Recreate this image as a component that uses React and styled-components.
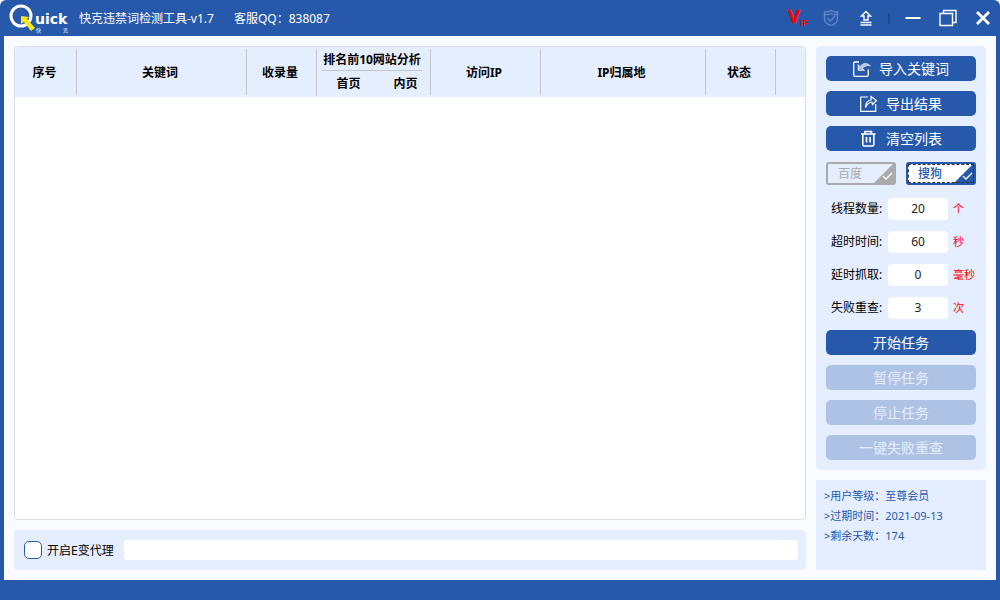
import React, { useState } from 'react';
import styled, { createGlobalStyle } from 'styled-components';

const blue = '#2759ab';
const pale = '#e5eeff';

const GlobalStyle = createGlobalStyle`
  * {
    box-sizing: border-box;
  }

  body {
    margin: 0;
    background: #fff;
  }

  body, button, input {
    font-family: "Noto Sans", "Noto Sans CJK SC", sans-serif;
    font-size: 12px;
    line-height: 16px;
  }
`;

const Window = styled.div`
  display: flex;
  flex-direction: column;
  min-height: 100vh;
  background: ${blue};
  border-radius: 6px 6px 0 0;
`;

const TitleBar = styled.header`
  display: flex;
  align-items: center;
  height: 36px;
  padding-left: 9px;
  color: #fff;
`;

const Title = styled.h1`
  margin: 0 20px 0 9px;
  padding-top: 2px;
  font-size: 12px;
  font-weight: 400;
`;

const Contact = styled.span`
  flex: 1;
  padding-top: 2px;
`;

const BarButton = styled.button`
  display: flex;
  align-items: center;
  justify-content: center;
  width: ${({ $wide }) => ($wide ? '35px' : '34px')};
  height: 36px;
  padding: 0;
  border: 0;
  background: none;
  color: #fff;
`;

const Divider = styled.span`
  width: 2px;
  height: 11px;
  margin: 0 5px;
  background: #1f4a93;
`;

const Body = styled.div`
  display: flex;
  flex: 1;
  gap: 10px;
  margin: 0 4px 20px;
  padding: 10px;
  background: #f9fbfe;
`;

const Main = styled.main`
  display: flex;
  flex: 1;
  flex-direction: column;
  gap: 10px;
  min-width: 0;
`;

const TableBox = styled.div`
  flex: 1;
  overflow: hidden;
  border: 1px solid #dedfe2;
  border-radius: 4px;
  background: #fff;
`;

const Table = styled.table`
  width: 100%;
  table-layout: fixed;
  border-collapse: collapse;
  background: ${pale};
`;

const Row = styled.tr`
  height: 25px;
`;

const Th = styled.th`
  padding: 2px 2px 0 0;
  font-weight: 700;
  color: #000;
  background: linear-gradient(#c4c6ca, #c4c6ca) no-repeat left center;
  background-size: ${({ $line }) => ($line ? '1px 46px' : '0 0')};
`;

const GroupTh = styled(Th)`
  padding: 0;
  background-position: left 2px;
`;

const SubTh = styled(Th)`
  padding: 0 0 1px 8px;
  background-position: left -22px;
`;

const GroupLabel = styled.span`
  display: block;
  margin: 0 8px 0 6px;
  height: 22px;
  line-height: 22px;
  white-space: nowrap;
  border-bottom: 1px solid #c4c6ca;
`;

const ProxyBar = styled.div`
  display: flex;
  align-items: center;
  height: 40px;
  padding: 0 8px 0 10px;
  border-radius: 4px;
  background: ${pale};
`;

const ProxyLabel = styled.label`
  display: flex;
  align-items: center;
  gap: 5px;
  margin-right: 10px;
  color: #000;
`;

const ProxyText = styled.span`
  padding-top: 2px;
`;

const CheckBox = styled.input`
  appearance: none;
  width: 18px;
  height: 18px;
  margin: 0;
  border: 1px solid ${blue};
  border-radius: 5px;
  background: #fff;

  &:checked {
    background: ${blue};
  }
`;

const ProxyInput = styled.input`
  flex: 1;
  min-width: 0;
  height: 20px;
  padding: 0 6px;
  border: 0;
  border-radius: 4px;
  background: #fff;
`;

const Side = styled.aside`
  display: flex;
  flex-direction: column;
  gap: 10px;
  width: 170px;
`;

const Panel = styled.section`
  display: flex;
  flex-direction: column;
  gap: 10px;
  padding: 10px;
  border-radius: 5px;
  background: ${pale};
`;

const Button = styled.button`
  display: flex;
  align-items: center;
  justify-content: center;
  gap: 8px;
  height: 25px;
  padding: 0;
  border: 0;
  border-radius: 5px;
  font-size: 14px;
  color: #fff;
  background: ${blue};

  &:disabled {
    color: ${pale};
    background: #aec2e5;
  }
`;

const Engines = styled.div`
  display: flex;
  gap: 10px;
  padding: 1px 0;
`;

const Engine = styled.button`
  position: relative;
  flex: 1;
  height: 23px;
  padding: 0 22px 0 0;
  border: 2px solid ${({ $on }) => ($on ? blue : '#aaa')};
  border-radius: 3px;
  font-weight: ${({ $on }) => ($on ? 500 : 400)};
  line-height: 18px;
  color: ${({ $on }) => ($on ? blue : '#aaa')};
  background: ${({ $on }) => ($on ? '#fff' : pale)};
  outline: none;

  svg {
    position: absolute;
    right: 0;
    bottom: 0;
  }

  &::after {
    content: '';
    position: absolute;
    inset: 0;
    border: ${({ $on }) => ($on ? '1px dashed #333' : '0')};
  }
`;

const Fields = styled.div`
  display: flex;
  flex-direction: column;
  gap: 11px;
  padding: 2px 0 1px 5px;
`;

const Field = styled.div`
  display: flex;
  align-items: center;
  height: 22px;
`;

const FieldLabel = styled.label`
  width: 57px;
  color: #000;
`;

const NumberInput = styled.input`
  width: 60px;
  height: 22px;
  padding: 0 0 2px;
  border: 0;
  border-radius: 4px;
  text-align: center;
  color: #222;
  background: #fff;
`;

const Unit = styled.span`
  margin-left: 5px;
  font-size: 11px;
  white-space: nowrap;
  color: #f00;
`;

const Info = styled.section`
  flex: 1;
  padding: 6px 8px;
  font-size: 11px;
  line-height: 20px;
  color: ${blue};
  background: ${pale};
`;

const InfoLine = styled.div`
  white-space: nowrap;
`;

const Logo = () => (
  <svg width="61" height="32" viewBox="9 2 61 32" fill="none" aria-label="Quick">
    <circle cx="21" cy="16" r="10" stroke="#fff" strokeWidth="3" />
    <path d="M21 16l8 1-2 2 8 9-4 3-7-9-3 2z" fill="#ffe81a" />
    <text x="35" y="24" fontSize="14" fontWeight="700" fontFamily="DejaVu Sans" fill="#fff">uick</text>
    <text x="36" y="32" fontSize="5" fontFamily="Noto Sans CJK SC" fill="#fff">快</text>
    <text x="63" y="32" fontSize="5" fontFamily="Noto Sans CJK SC" fill="#fff">克</text>
  </svg>
);

const VipIcon = () => (
  <svg width="20" height="20" viewBox="0 0 20 20" fill="#f00" stroke="#f00" fontFamily="Liberation Sans" fontWeight="700">
    <text x="0" y="15" fontSize="18" strokeWidth=".6">V</text>
    <text x="12" y="18" fontSize="9" strokeWidth="0">IP</text>
  </svg>
);

const ShieldIcon = () => (
  <svg width="18" height="18" viewBox="0 0 18 18" fill="none" stroke="#6387c4" strokeWidth="1.3">
    <path d="M8 1.500c2 1.200 4 1.500 6.500 1.500V10c0 3-3 5.500-6.500 6.500-3.500-1-6.500-3.500-6.500-6.500V3C4 3 6 2.700 8 1.500z" />
    <path d="M2 5.500h2.500C6 5.500 7 5 8 4.500c1 .5 2 1 3.500 1H14M4.500 9l3 3 4.500-5" />
  </svg>
);

const UploadIcon = () => (
  <svg width="12" height="16" viewBox="0 0 12 16" fill="none" stroke="#fff" strokeWidth="1.4">
    <path d="M6 1.500L1.500 6H4v4h4V6h2.500z" />
    <path d="M.5 12.500h11M.5 15h11" />
  </svg>
);

const MinimizeIcon = () => (
  <svg width="16" height="16" viewBox="0 0 16 16" stroke="#fff" strokeWidth="2">
    <path d="M.5 8h15" />
  </svg>
);

const RestoreIcon = () => (
  <svg width="18" height="18" viewBox="0 0 18 18" fill="none" stroke="#fff" strokeWidth="1.4">
    <path d="M1 4.500h12.500V16.500H1z" />
    <path d="M4.500 4V1.500h12.500v12h-3" />
  </svg>
);

const CloseIcon = () => (
  <svg width="14" height="14" viewBox="0 0 14 14" stroke="#fff" strokeWidth="2.800">
    <path d="M1 1l12 12M13 1L1 13" />
  </svg>
);

const ImportIcon = () => (
  <svg width="18" height="18" viewBox="0 0 18 18" fill="none" stroke="#fff" strokeWidth="1.300">
    <path d="M6 2H2Q.7 2 .7 3.300v11.700q0 1.300 1.300 1.300h12q1.300 0 1.300-1.300V9.500" />
    <path d="M5 10.500V4.500l2 2C10 2.500 14.500 2.500 17.500 6 14.500 4.700 12 6 9.500 8.300l2 2.200z" fill="#fff" fillOpacity=".65" strokeWidth=".6" />
  </svg>
);

const ExportIcon = () => (
  <svg width="18" height="18" viewBox="0 0 18 18" fill="none" stroke="#fff" strokeWidth="1.200">
    <path d="M8 2H.7v14.300h15V9" />
    <path d="M5.500 12.500C5.500 8 7.500 5.500 11 5V1.500L16.500 5.500 12.500 9.500 11.800 7C9 7.500 7 9 5.500 12.500z" />
  </svg>
);

const TrashIcon = () => (
  <svg width="18" height="18" viewBox="0 0 18 18" fill="none" stroke="#fff" strokeWidth="1.600">
    <path d="M1 4h14.500M5 3.500V1.500h6.500v2M2.800 4.500v10q0 1.500 1.500 1.500h8q1.500 0 1.500-1.500v-10M6.500 7v5.500M10 7v5.500" />
  </svg>
);

const CornerTick = ({ color }) => (
  <svg width="20" height="20" viewBox="0 0 20 20" fill="none">
    <path d="M20 0v20H0z" fill={color} />
    <path d="M9 13l3 3 6-6" stroke="#fff" strokeWidth="1.300" />
  </svg>
);

const fields = [
  { id: 'threads', label: '线程数量:', value: '20', unit: '个' },
  { id: 'timeout', label: '超时时间:', value: '60', unit: '秒' },
  { id: 'delay', label: '延时抓取:', value: '0', unit: '毫秒' },
  { id: 'retry', label: '失败重查:', value: '3', unit: '次' },
];

const info = [
  '>用户等级：至尊会员',
  '>过期时间：2021-09-13',
  '>剩余天数：174',
];

const columns = [61, 170, 70, 57, 57, 110, 165, 70];

const ResultTable = () => (
  <TableBox>
    <Table>
      <colgroup>
        {columns.map((width, i) => <col key={i} width={width} />)}
        <col />
      </colgroup>
      <thead>
        <Row>
          <Th rowSpan={2}>序号</Th>
          <Th rowSpan={2} $line>关键词</Th>
          <Th rowSpan={2} $line>收录量</Th>
          <GroupTh colSpan={2} $line><GroupLabel>排名前10网站分析</GroupLabel></GroupTh>
          <Th rowSpan={2} $line>访问IP</Th>
          <Th rowSpan={2} $line>IP归属地</Th>
          <Th rowSpan={2} $line>状态</Th>
          <Th rowSpan={2} $line />
        </Row>
        <Row>
          <SubTh $line>首页</SubTh>
          <SubTh>内页</SubTh>
        </Row>
      </thead>
    </Table>
  </TableBox>
);

const App = () => {
  const [engine, setEngine] = useState('搜狗');

  return (
    <>
      <GlobalStyle />
      <Window>
        <TitleBar>
          <Logo />
          <Title>快克违禁词检测工具-v1.7</Title>
          <Contact>客服QQ：838087</Contact>
          <BarButton aria-label="VIP"><VipIcon /></BarButton>
          <BarButton aria-label="安全"><ShieldIcon /></BarButton>
          <BarButton aria-label="更新"><UploadIcon /></BarButton>
          <Divider />
          <BarButton $wide aria-label="最小化"><MinimizeIcon /></BarButton>
          <BarButton $wide aria-label="还原"><RestoreIcon /></BarButton>
          <BarButton $wide aria-label="关闭"><CloseIcon /></BarButton>
        </TitleBar>
        <Body>
          <Main>
            <ResultTable />
            <ProxyBar>
              <ProxyLabel>
                <CheckBox type="checkbox" />
                <ProxyText>开启E变代理</ProxyText>
              </ProxyLabel>
              <ProxyInput type="text" aria-label="代理地址" />
            </ProxyBar>
          </Main>
          <Side>
            <Panel>
              <Button><ImportIcon />导入关键词</Button>
              <Button><ExportIcon />导出结果</Button>
              <Button><TrashIcon />清空列表</Button>
              <Engines>
                {['百度', '搜狗'].map(name => (
                  <Engine
                    key={name}
                    $on={engine === name}
                    aria-pressed={engine === name}
                    onClick={() => setEngine(name)}>
                    {name}
                    <CornerTick color={engine === name ? blue : '#aaa'} />
                  </Engine>
                ))}
              </Engines>
              <Fields>
                {fields.map(({ id, label, value, unit }) => (
                  <Field key={id}>
                    <FieldLabel htmlFor={id}>{label}</FieldLabel>
                    <NumberInput id={id} type="text" defaultValue={value} />
                    <Unit>{unit}</Unit>
                  </Field>
                ))}
              </Fields>
              <Button>开始任务</Button>
              <Button disabled>暂停任务</Button>
              <Button disabled>停止任务</Button>
              <Button disabled>一键失败重查</Button>
            </Panel>
            <Info>
              {info.map(line => <InfoLine key={line}>{line}</InfoLine>)}
            </Info>
          </Side>
        </Body>
      </Window>
    </>
  );
};

export default App;
